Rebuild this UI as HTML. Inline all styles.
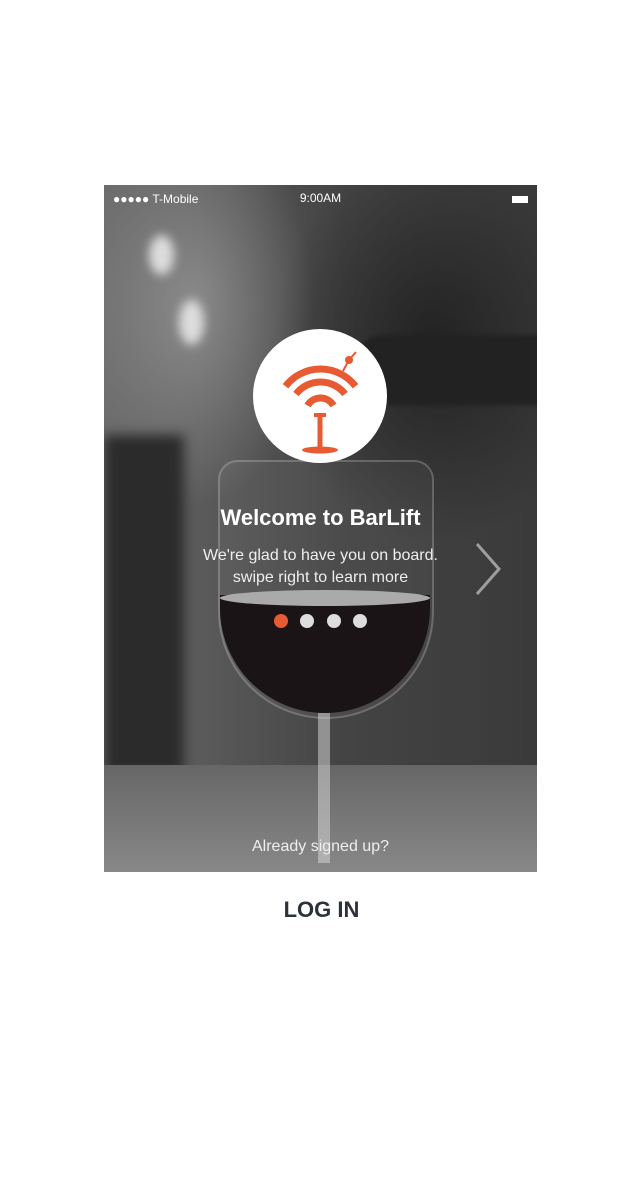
<!DOCTYPE html>
<html><head><style>
body{margin:0;width:643px;height:1185px;background:#fff;position:relative;overflow:hidden;font-family:"Liberation Sans",sans-serif}
#ph{position:absolute;left:104px;top:185px;width:433px;height:687px;overflow:hidden;
background:
radial-gradient(ellipse 120px 200px at 90px 120px,rgba(170,170,170,.6),transparent),
radial-gradient(ellipse 160px 200px at 330px 160px,#222,transparent),
linear-gradient(90deg,#6a6a6a 0%,#555 30%,#444 55%,#3a3a3a 100%);}
.t{position:absolute;color:#fff;text-align:center;left:0;width:433px}
</style></head><body>
<div id="ph">
 <div style="position:absolute;left:45px;top:50px;width:25px;height:40px;border-radius:50%;background:#ddd;filter:blur(5px)"></div>
 <div style="position:absolute;left:75px;top:115px;width:25px;height:45px;border-radius:50%;background:#ddd;filter:blur(5px)"></div>
 <div style="position:absolute;left:0;top:250px;width:80px;height:340px;background:#2b2b2b;filter:blur(6px)"></div>
 <div style="position:absolute;left:0;top:580px;width:433px;height:107px;background:linear-gradient(#666,#888)"></div>
 <div style="position:absolute;left:250px;top:150px;width:200px;height:70px;background:#222;border-radius:30px 0 0 30px;filter:blur(2px)"></div>
 <div style="position:absolute;left:114px;top:275px;width:212px;height:255px;border-radius:20px 20px 110px 110px;border:2px solid rgba(255,255,255,.2);background:rgba(255,255,255,.04)"></div>
 <div style="position:absolute;left:116px;top:410px;width:210px;height:118px;border-radius:0 0 105px 105px;background:#1a1416"></div>
 <div style="position:absolute;left:116px;top:405px;width:210px;height:16px;border-radius:50%;background:#aaa"></div>
 <div style="position:absolute;left:214px;top:528px;width:12px;height:150px;background:rgba(220,220,220,.5)"></div>
 <svg style="position:absolute;left:365px;top:355px" width="40" height="60"><path d="M8 4 L30 29 L8 54" fill="none" stroke="rgba(255,255,255,.5)" stroke-width="3"/></svg>
</div>
<div style="position:absolute;left:104px;top:185px;width:433px;height:687px">
 <div style="position:absolute;left:9px;top:7px;font-size:12px;color:#fff">●●●●● T-Mobile</div>
 <div class="t" style="top:6px;font-size:12px">9:00AM</div>
 <div style="position:absolute;right:9px;top:11px;width:16px;height:7px;background:#fff"></div>
 <div style="position:absolute;left:149px;top:144px;width:134px;height:134px;border-radius:50%;background:#fff"></div>
 <svg style="position:absolute;left:0;top:0" width="433" height="687">
  <g fill="none" stroke="#e85a32" stroke-width="7">
   <path d="M181.5 201.3 A44 44 0 0 1 251.5 201.3"/>
   <path d="M192 209 A31 31 0 0 1 241 209"/>
   <path d="M203.5 220.5 A15 15 0 0 1 229.5 220.5"/>
  </g>
  <line x1="216" y1="230" x2="216" y2="264" stroke="#e85a32" stroke-width="5"/>
  <rect x="210" y="228" width="12" height="4" fill="#e85a32"/>
  <circle cx="245" cy="175" r="4" fill="#e85a32"/>
  <line x1="245" y1="175" x2="252" y2="167" stroke="#e85a32" stroke-width="2"/>
  <line x1="245" y1="175" x2="239" y2="186" stroke="#e85a32" stroke-width="2"/>
  <ellipse cx="216" cy="265" rx="18" ry="3.5" fill="#e85a32"/>
 </svg>
 <div class="t" style="top:320px;font-size:22px;font-weight:bold">Welcome to BarLift</div>
 <div class="t" style="top:360px;font-size:16px;line-height:22px;color:#eee">We're glad to have you on board.<br>swipe right to learn more</div>
 <div style="position:absolute;left:170px;top:429px;width:14px;height:14px;border-radius:50%;background:#e85a32"></div>
 <div style="position:absolute;left:196px;top:429px;width:14px;height:14px;border-radius:50%;background:#ddd"></div>
 <div style="position:absolute;left:223px;top:429px;width:14px;height:14px;border-radius:50%;background:#ddd"></div>
 <div style="position:absolute;left:249px;top:429px;width:14px;height:14px;border-radius:50%;background:#ddd"></div>
 <div class="t" style="top:653px;font-size:16px;color:#eee">Already signed up?</div>
</div>
<div style="position:absolute;left:0;width:643px;top:897px;text-align:center;font-size:22px;font-weight:bold;color:#2c323a">LOG IN</div>
</body></html>
